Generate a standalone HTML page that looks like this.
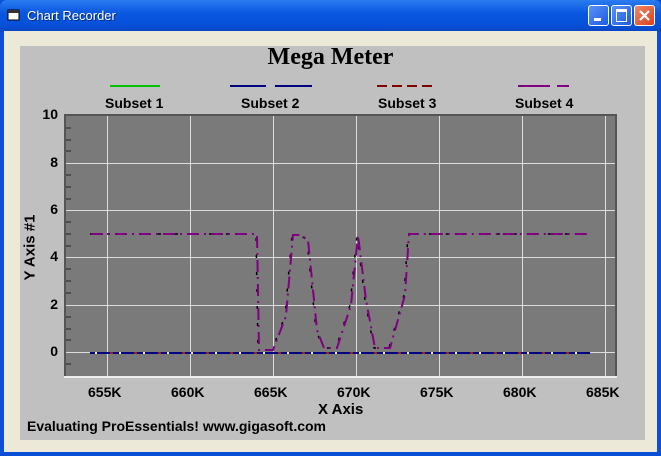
<!DOCTYPE html>
<html><head><style>
body{margin:0;width:661px;height:456px;overflow:hidden;font-family:"Liberation Sans",sans-serif;}
.win{position:absolute;left:0;top:0;width:661px;height:456px;background:#0a4fd6;}
.title{position:absolute;left:0;top:0;width:661px;height:32px;background:linear-gradient(#2a7cf0,#0a58e0 40%,#0650d8 80%,#0a44c0);border-radius:7px 7px 0 0;}
.title span{position:absolute;left:27px;top:8px;color:#fff;font-size:13px;text-shadow:1px 1px #0a2a80;}
.btn{position:absolute;top:5px;width:19px;height:19px;border:1px solid #fff;border-radius:3px;background:linear-gradient(135deg,#5a92f8,#1c5ae0);}
.client{position:absolute;left:4px;top:31px;width:653px;height:421px;background:#ece9d8;}
.panel{position:absolute;left:20px;top:46px;width:625px;height:394px;background:#c0c0c0;}
.t{position:absolute;font-weight:bold;font-size:14px;color:#000;}
</style></head><body>
<div class="win">
<div class="title"><svg style="position:absolute;left:7px;top:9px" width="14" height="13"><rect x="1" y="1" width="11" height="10" fill="#fff" stroke="#000"/><rect x="1" y="1" width="11" height="3" fill="#333"/></svg><span>Chart Recorder</span>
<div class="btn" style="left:588px"><div style="position:absolute;left:5px;top:12px;width:7px;height:3px;background:#fff"></div></div>
<div class="btn" style="left:611px"><div style="position:absolute;left:4px;top:3px;width:9px;height:9px;border:1px solid #fff;border-top-width:3px"></div></div>
<div class="btn" style="left:634px;background:linear-gradient(135deg,#f08a6a,#d8401c)"><svg width="19" height="19"><path d="M5 5L14 14M14 5L5 14" stroke="#fff" stroke-width="2.2"/></svg></div>
</div>
<div class="client"></div>
<div class="panel"></div>
<div class="t" style="left:0;width:661px;top:44px;text-align:center;font-family:'Liberation Serif',serif;font-size:24px">Mega Meter</div>
<svg style="position:absolute;left:0;top:0" width="661" height="456">
<g stroke-width="2">
<line x1="110" y1="86" x2="160" y2="86" stroke="#00c000"/>
<line x1="230" y1="86" x2="266" y2="86" stroke="#000080"/><line x1="275" y1="86" x2="312" y2="86" stroke="#000080"/>
<path d="M377 86h10M392 86h10M407 86h10M422 86h10" stroke="#800000"/>
<path d="M518 86h32M557 86h12" stroke="#800080"/>
</g>
<rect x="64" y="114" width="553" height="264" fill="#555"/>
<rect x="66" y="116" width="549" height="260" fill="#7a7a7a"/>
<line x1="64" y1="377" x2="617" y2="377" stroke="#eee" stroke-width="2"/>
<g stroke="#ddd" stroke-width="1">
<path d="M66 163.5H615M66 210.5H615M66 257.5H615M66 305.5H615M66 352.5H615"/>
<path d="M107.5 116V376M190.5 116V376M273.5 116V376M356.5 116V376M439.5 116V376M522.5 116V376M605.5 116V376"/>
</g>
<g stroke="#222" stroke-width="1">
<path d="M66 128h5M66 140h5M66 151h5M66 175h5M66 187h5M66 199h5M66 222h5M66 234h5M66 246h5M66 269h5M66 281h5M66 293h5M66 317h5M66 329h5M66 340h5M66 364h5"/>
</g>
<polyline points="90,234 256,234 258,350 272,350 285,316 292,235 300,235 307,240 316,330 323,348 336,348 350,305 357,235 365,300 374,348 389,348 404,295 408,234 590,234" fill="none" stroke="#000" stroke-width="1.5" stroke-dasharray="3 14"/>
<polyline points="90,234 256,234 258,350 272,350 285,316 292,235 300,235 307,240 316,330 323,348 336,348 350,305 357,235 365,300 374,348 389,348 404,295 408,234 590,234" fill="none" stroke="#800080" stroke-width="2" stroke-dasharray="12 5 2 5" transform="translate(1,0)"/>
<line x1="90" y1="353" x2="590" y2="353" stroke="#000080" stroke-width="2"/>
<line x1="90" y1="353" x2="590" y2="353" stroke="#a02020" stroke-width="2" stroke-dasharray="3 21" stroke-dashoffset="-20"/>
<line x1="90" y1="353" x2="590" y2="353" stroke="#eee" stroke-width="2" stroke-dasharray="2 22" stroke-dashoffset="-5"/>
</svg>
<div class="t" style="left:105px;top:95px">Subset 1</div>
<div class="t" style="left:241px;top:95px">Subset 2</div>
<div class="t" style="left:378px;top:95px">Subset 3</div>
<div class="t" style="left:515px;top:95px">Subset 4</div>
<div class="t" style="left:38px;top:106px;width:20px;text-align:right">10</div>
<div class="t" style="left:38px;top:154px;width:20px;text-align:right">8</div>
<div class="t" style="left:38px;top:201px;width:20px;text-align:right">6</div>
<div class="t" style="left:38px;top:248px;width:20px;text-align:right">4</div>
<div class="t" style="left:38px;top:296px;width:20px;text-align:right">2</div>
<div class="t" style="left:38px;top:343px;width:20px;text-align:right">0</div>
<div class="t" style="left:-15px;top:239px;width:90px;text-align:center;transform:rotate(-90deg);font-size:15px">Y Axis #1</div>
<div class="t" style="left:88px;top:384px">655K</div>
<div class="t" style="left:171px;top:384px">660K</div>
<div class="t" style="left:254px;top:384px">665K</div>
<div class="t" style="left:337px;top:384px">670K</div>
<div class="t" style="left:420px;top:384px">675K</div>
<div class="t" style="left:503px;top:384px">680K</div>
<div class="t" style="left:586px;top:384px">685K</div>
<div class="t" style="left:318px;top:401px;font-size:15px">X Axis</div>
<div class="t" style="left:27px;top:418px">Evaluating ProEssentials! www.gigasoft.com</div>
</div>
</body></html>
